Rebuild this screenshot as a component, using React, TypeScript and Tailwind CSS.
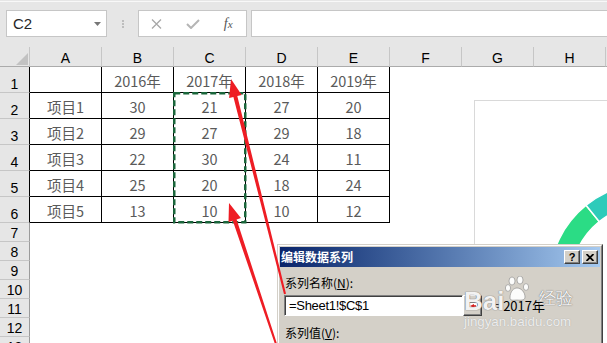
import React from "react";

const COLS = ["A", "B", "C", "D", "E", "F", "G", "H"];

const DATA = [
  ["", "2016年", "2017年", "2018年", "2019年"],
  ["项目1", "30", "21", "27", "20"],
  ["项目2", "29", "27", "29", "18"],
  ["项目3", "22", "30", "24", "11"],
  ["项目4", "25", "20", "18", "24"],
  ["项目5", "13", "10", "10", "12"],
];

const ROWS = Array.from({ length: 13 }, (_, i) => i + 1);

type Pt = [number, number];

// tapered annotation arrow, head at tip
function arrowPoints(tip: Pt, tail: Pt) {
  const dx = tail[0] - tip[0];
  const dy = tail[1] - tip[1];
  const len = Math.hypot(dx, dy);
  const ux = dx / len;
  const uy = dy / len;
  const px = -uy;
  const py = ux;
  const head = 18;
  const hw = 6.5;
  const bx = tip[0] + ux * head;
  const by = tip[1] + uy * head;
  const pts: Pt[] = [
    tip,
    [bx + px * hw, by + py * hw],
    [bx + px * 2, by + py * 2],
    [tail[0] + px * 1, tail[1] + py * 1],
    [tail[0] - px * 1, tail[1] - py * 1],
    [bx - px * 2, by - py * 2],
    [bx - px * hw, by - py * hw],
  ];
  return pts.map((p) => `${p[0].toFixed(1)},${p[1].toFixed(1)}`).join(" ");
}

function ringPath(cx: number, cy: number, R: number, r: number, a0: number, a1: number) {
  const rad = (a: number) => (a * Math.PI) / 180;
  const p = (rr: number, a: number) =>
    `${(cx + rr * Math.cos(rad(a))).toFixed(2)} ${(cy + rr * Math.sin(rad(a))).toFixed(2)}`;
  const large = a1 - a0 > 180 ? 1 : 0;
  return `M ${p(R, a0)} A ${R} ${R} 0 ${large} 1 ${p(R, a1)} L ${p(r, a1)} A ${r} ${r} 0 ${large} 0 ${p(r, a0)} Z`;
}

function Toolbar() {
  return (
    <div className="h-[47px] bg-[#e6e6e6]">
      <div className="h-px" />
      <div className="h-px bg-[#f8f8f8]" />
      <div className="mt-[8px] flex h-[27px]">
        {/* Name box */}
        <div className="ml-[6px] flex w-[101px] items-center justify-between border border-[#c6c6c6] bg-white pl-[6px] pr-[5px]">
          <span className="text-[15px] leading-none text-[#262626]">C2</span>
          <svg width="7" height="4" viewBox="0 0 7 4">
            <path d="M0 0 H7 L3.5 4 Z" fill="#777" />
          </svg>
        </div>
        <div className="flex w-[31px] flex-col items-center justify-center gap-[1px]">
          <div className="h-[2px] w-[2px] bg-[#bdbdbd]" />
          <div className="h-[2px] w-[2px] bg-[#bdbdbd]" />
          <div className="h-[2px] w-[2px] bg-[#bdbdbd]" />
        </div>
        {/* Cancel / enter / fx */}
        <div className="flex w-[109px] items-center border border-[#c6c6c6] bg-white">
          <div className="flex w-[36px] justify-center">
            <svg width="11" height="10" viewBox="0 0 11 10">
              <path d="M1 0.5 L10 9.5 M10 0.5 L1 9.5" stroke="#a8a8a8" strokeWidth="1.3" />
            </svg>
          </div>
          <div className="flex w-[36px] justify-center">
            <svg width="14" height="10" viewBox="0 0 14 10">
              <path d="M1 5 L5 9 L13 1" stroke="#b5b5b5" strokeWidth="2" fill="none" />
            </svg>
          </div>
          <div className="flex w-[36px] justify-center">
            <span className="font-['Liberation_Serif',serif] text-[14px] italic leading-none text-[#555]">
              f<span className="text-[11px]">x</span>
            </span>
          </div>
        </div>
        <div className="ml-[4px] flex-1 border border-r-0 border-[#c6c6c6] bg-white" />
      </div>
    </div>
  );
}

function Sheet() {
  return (
    <div className="grid grid-cols-[30px_repeat(8,72px)_1fr] font-['Noto_Sans_CJK_SC',sans-serif]">
      <div className="flex h-[20px] items-end justify-end border-b border-r border-b-[#ababab] border-r-[#c6c6c6] bg-[#e6e6e6] pb-[1px] pr-[1px]">
        <svg width="12" height="12" viewBox="0 0 12 12">
          <path d="M0 12 L12 12 L12 0 Z" fill="#c2c2c2" />
        </svg>
      </div>
      {COLS.map((c) => (
        <div
          key={c}
          className="flex h-[20px] items-center justify-center border-b border-r border-b-[#ababab] border-r-[#c6c6c6] bg-[#e6e6e6] pt-[2px] font-['Liberation_Sans',sans-serif] text-[14px] leading-[16px] text-black"
        >
          {c}
        </div>
      ))}
      <div className="h-[20px] border-b border-[#ababab] bg-[#e6e6e6]" />

      {ROWS.map((r) => {
        const tall = r <= 6;
        return (
          <React.Fragment key={r}>
            <div
              className={
                tall
                  ? "flex h-[26px] items-end justify-center border-b border-r border-b-[#c6c6c6] border-r-black bg-[#e6e6e6] font-['Liberation_Sans',sans-serif] text-[14px] leading-[16px] text-black"
                  : "flex h-[19px] items-end justify-center border-b border-r border-b-[#c6c6c6] border-r-[#9b9b9b] bg-[#e6e6e6] font-['Liberation_Sans',sans-serif] text-[14px] leading-[16px] text-black"
              }
            >
              {r}
            </div>
            {COLS.map((c, ci) =>
              tall && ci < 5 ? (
                <div
                  key={c}
                  className="flex h-[26px] items-end justify-center border-b border-r border-black pb-[2px] text-[14.5px] leading-[18px] text-[#5a5a5a]"
                >
                  {DATA[r - 1][ci]}
                </div>
              ) : (
                <div key={c} className={tall ? "h-[26px]" : "h-[19px]"} />
              )
            )}
            <div className={tall ? "h-[26px]" : "h-[19px]"} />
          </React.Fragment>
        );
      })}
    </div>
  );
}

function Chart() {
  const cx = 174;
  const cy = 182;
  return (
    <div className="absolute left-[474px] top-[100px] h-[260px] w-[150px] border border-[#d9d9d9] bg-white">
      <svg width="150" height="260" viewBox="0 0 150 260">
        <path d={ringPath(cx, cy, 100, 79, -235, -129)} fill="#2bdc85" stroke="#fff" strokeWidth="1.5" />
        <path d={ringPath(cx, cy, 100, 79, -129, -40)} fill="#2dcbba" stroke="#fff" strokeWidth="1.5" />
      </svg>
    </div>
  );
}

function TitleButton({ children }: { children: React.ReactNode }) {
  return (
    <div className="flex h-[14px] w-[16px] items-center justify-center border border-b-[#404040] border-l-white border-r-[#404040] border-t-white bg-[#d4d0c8] shadow-[inset_-1px_-1px_0_#808080]">
      {children}
    </div>
  );
}

function Dialog() {
  return (
    <div className="absolute left-[277px] top-[244px] h-[110px] w-[326px] border border-b-[#404040] border-l-[#d4d0c8] border-r-[#404040] border-t-[#d4d0c8] font-['Noto_Sans_CJK_SC',sans-serif]">
      <div className="h-full border border-b-[#808080] border-l-white border-r-[#808080] border-t-white bg-[#d4d0c8] p-px">
        <div className="flex h-[20px] items-center justify-between bg-linear-to-r from-[#0a246a] to-[#a6caf0] pl-px pr-[2px]">
          <span className="text-[12px] font-bold leading-none text-white">编辑数据系列</span>
          <div className="flex gap-[2px]">
            <TitleButton>
              <span className="font-['Liberation_Sans',sans-serif] text-[11px] font-bold leading-none text-black">?</span>
            </TitleButton>
            <TitleButton>
              <svg width="8" height="7" viewBox="0 0 8 7">
                <path d="M0.5 0 L7.5 7 M7.5 0 L0.5 7" stroke="#000" strokeWidth="1.8" />
              </svg>
            </TitleButton>
          </div>
        </div>
        <div className="px-[4px] pt-[9px] text-[12px] text-black">
          <div className="ml-px h-[14px] leading-[14px]">
            系列名称(<span className="underline">N</span>):
          </div>
          <div className="mt-[5px] flex items-center">
            <div className="flex h-[21px] w-[179px] items-center border border-b-white border-l-[#808080] border-r-white border-t-[#808080] bg-white pl-[4px] font-['Liberation_Sans',sans-serif] text-[13px] tracking-[-0.3px] shadow-[inset_1px_1px_0_#404040]">
              =Sheet1!$C$1
            </div>
            <div className="flex h-[21px] w-[19px] items-center justify-center border border-b-[#404040] border-l-white border-r-[#404040] border-t-white bg-[#d4d0c8] shadow-[inset_-1px_-1px_0_#808080]">
              <svg width="10" height="8" viewBox="0 0 10 8">
                <rect x="0.5" y="0.5" width="9" height="7" fill="#fff" stroke="#808080" />
                <path d="M2 4 L6 2 L6 6 Z" fill="#d81e1e" />
                <rect x="5" y="3.2" width="3" height="1.6" fill="#d81e1e" />
              </svg>
            </div>
            <span className="ml-[11px] text-[13px] leading-none">= 2017年</span>
          </div>
          <div className="ml-px mt-[10px] h-[14px] leading-[14px]">
            系列值(<span className="underline">V</span>):
          </div>
        </div>
      </div>
    </div>
  );
}

function Watermark() {
  return (
    <div className="pointer-events-none absolute left-[464px] top-[276px] text-white/90 [text-shadow:0_0_1px_#7a7a7a,0_0_1px_#7a7a7a]">
      <div className="flex items-start">
        <span className="mt-[12px] font-['Liberation_Sans',sans-serif] text-[26px] font-bold leading-[26px]">Bai</span>
        <svg width="28" height="26" viewBox="0 0 28 26" className="ml-[1px]">
          <g fill="rgba(255,255,255,0.92)" stroke="rgba(110,110,110,0.7)" strokeWidth="0.7">
            <ellipse cx="7" cy="5" rx="3" ry="4" />
            <ellipse cx="15" cy="4" rx="3" ry="4" />
            <ellipse cx="3" cy="12" rx="2.6" ry="3.4" />
            <ellipse cx="21" cy="11" rx="2.6" ry="3.4" />
            <path d="M5 22 C5 15 9 12 12 12 C16 12 20 16 20 21 C20 25 15 24 12 24 C9 24 5 25 5 22 Z" />
          </g>
        </svg>
        <span className="ml-[6px] mt-[14px] text-[17px] leading-[18px]">经验</span>
      </div>
      <div className="mt-[1px] font-['Liberation_Sans',sans-serif] text-[13.3px] leading-[14px] text-white/80 [text-shadow:0_0_1px_#9a9a9a]">
        jingyan.baidu.com
      </div>
    </div>
  );
}

function Arrows() {
  return (
    <svg className="pointer-events-none absolute left-0 top-0" width="607" height="343" viewBox="0 0 607 343">
      <polygon points={arrowPoints([231, 79], [285, 294])} fill="#ee1d24" />
      <polygon points={arrowPoints([229, 203], [278, 350])} fill="#ee1d24" />
    </svg>
  );
}

export default function App() {
  return (
    <div className="relative h-[343px] w-[607px] overflow-hidden bg-white font-['Liberation_Sans',sans-serif]">
      <Toolbar />
      <Sheet />
      <Chart />
      {/* copy marquee around C2:C6 */}
      <svg className="pointer-events-none absolute left-[173px] top-[92px]" width="74" height="132" viewBox="0 0 74 132">
        <rect x="1.25" y="1.25" width="71" height="129" fill="none" stroke="#1a663b" strokeWidth="2.5" strokeDasharray="6 3" />
      </svg>
      <Dialog />
      <Watermark />
      <Arrows />
    </div>
  );
}
